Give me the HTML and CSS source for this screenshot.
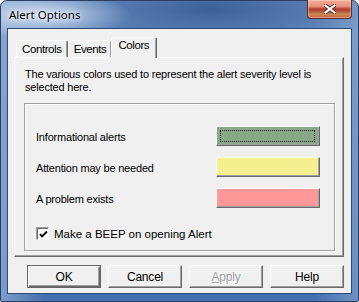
FILE: index.html
```html
<!DOCTYPE html>
<html lang="en">
<head>
    <meta charset="UTF-8">
    <title>Alert Options</title>
    <link rel="stylesheet" href="styles.css">
</head>
<body>
    <div class="window">
        <div class="titlebar">
            <span class="title">Alert Options</span>
            <div class="close">
                <svg width="12" height="10" viewBox="0 0 12 10">
                    <path d="M1.5 1.5 L10.5 8.5 M10.5 1.5 L1.5 8.5" stroke="#5a2418" stroke-width="4" stroke-linecap="square"/>
                    <path d="M1.5 1.5 L10.5 8.5 M10.5 1.5 L1.5 8.5" stroke="#fff" stroke-width="2.2" stroke-linecap="square"/>
                </svg>
            </div>
        </div>

        <div class="client">
            <!-- tab strip -->
            <div class="tabs">
                <div class="tab">Controls</div>
                <div class="tab">Events</div>
                <div class="tab active">Colors</div>
            </div>

            <div class="panel">
                <p class="intro">The various colors used to represent the alert severity level is selected here.</p>

                <div class="group">
                    <div class="rows">
                        <div class="row">
                            <span>Informational alerts</span>
                            <span class="swatch green"><span class="focus"></span></span>
                        </div>
                        <div class="row">
                            <span>Attention may be needed</span>
                            <span class="swatch yellow"></span>
                        </div>
                        <div class="row">
                            <span>A problem exists</span>
                            <span class="swatch red"></span>
                        </div>
                    </div>
                    <label class="check">
                        <span class="box">
                            <svg width="9" height="9" viewBox="0 0 9 9">
                                <path d="M1 4 L3 6.5 L8 1.5" fill="none" stroke="#000" stroke-width="1.8"/>
                            </svg>
                        </span>
                        Make a BEEP on opening Alert
                    </label>
                </div>
            </div>

            <div class="buttons">
                <div class="btn default">OK</div>
                <div class="btn">Cancel</div>
                <div class="btn disabled"><u>A</u>pply</div>
                <div class="btn">Help</div>
            </div>
        </div>
    </div>
</body>
</html>
```

FILE: styles.css
```css
body {
    margin: 0;
    padding: 0;
    background: #fff;
    font-family: "Liberation Sans", Arial, sans-serif;
    font-size: 11px;
    letter-spacing: -0.2px;
    color: #000;
}
.window {
    width: 359px;
    height: 302px;
    box-sizing: border-box;
    border: 1px solid #2a3f63;
    border-radius: 7px 7px 2px 2px;
    padding: 0 6px 7px 6px;
    display: flex;
    flex-direction: column;
    background:
        radial-gradient(ellipse 90px 24px at 40px 14px, rgba(215, 228, 244, 0.95), rgba(215, 228, 244, 0) 100%),
        radial-gradient(ellipse 170px 40px at 210px 8px, rgba(52, 88, 145, 0.85), rgba(52, 88, 145, 0) 100%),
        linear-gradient(90deg, rgba(150, 178, 215, 0.7) 0%, rgba(150, 178, 215, 0) 12%, rgba(150, 178, 215, 0) 88%, rgba(150, 178, 215, 0.5) 100%),
        linear-gradient(#6b8fc2 0%, #5a80b8 40%, #4470b0 100%);
}
.titlebar {
    height: 27px;
    display: flex;
    align-items: flex-start;
}
.title {
    font-family: "Noto Sans", "Open Sans", sans-serif;
    font-size: 11.5px;
    letter-spacing: 0;
    padding: 6px 0 0 2px;
    text-shadow: 0 0 6px #fff, 0 0 3px #fff;
}
.close {
    margin-left: auto;
    margin-top: -1px;
    width: 45px;
    height: 19px;
    box-sizing: border-box;
    border: 1px solid #5b2b28;
    border-top: none;
    border-radius: 0 0 4px 4px;
    display: flex;
    align-items: center;
    justify-content: center;
    background: linear-gradient(#f2ab9a 0%, #e9937e 35%, #b13c2b 50%, #b0513a 62%, #cc8b52 80%, #c85739 100%);
    box-shadow: inset 0 0 0 1px rgba(255, 220, 200, 0.5);
}
.client {
    flex: 1;
    background: #f0f0f0;
    border: 1px solid #2f4a74;
    display: flex;
    flex-direction: column;
}
.tabs {
    display: flex;
    align-items: flex-end;
    height: 20px;
    margin: 8px 0 0 8px;
    position: relative;
    z-index: 1;
}
.tab {
    height: 17px;
    box-sizing: border-box;
    padding: 2px 5px 0 5px;
    border: 1px solid;
    border-color: #fff #696969 transparent #fff;
    box-shadow: inset -1px 0 0 #a0a0a0;
    border-bottom: none;
    border-radius: 2px 2px 0 0;
    background: #f0f0f0;
    font-size: 11.5px;
    letter-spacing: -0.4px;
}
.tab.active {
    height: 21px;
    margin: 0 -2px -1px -1px;
    padding: 1px 7px 0 6px;
}
.panel {
    height: 200px;
    box-sizing: border-box;
    margin: 0 7px 0 6px;
    padding: 10px 8px 0 10px;
    border: 1px solid;
    border-color: #fff #696969 #696969 #fff;
    box-shadow: inset -1px -1px 0 #a0a0a0;
}
.intro {
    margin: 0;
    line-height: 13px;
    height: 26px;
}
.group {
    height: 148px;
    box-sizing: border-box;
    margin: 9px 0 0 -1px;
    padding: 0 14px 0 11px;
    border: 1px solid #a0a0a0;
    box-shadow: inset 1px 1px 0 #fff, 1px 1px 0 #fff;
}
.rows {
    display: flex;
    flex-direction: column;
    gap: 11px;
    padding-top: 22px;
}
.row {
    display: flex;
    align-items: center;
    justify-content: space-between;
    height: 20px;
}
.row span:first-child {
    padding-top: 2px;
}
.swatch {
    width: 104px;
    height: 20px;
    box-sizing: border-box;
    border: 1px solid;
    border-color: #fff #696969 #696969 #fff;
    box-shadow: inset -1px -1px 0 #a0a0a0;
    padding: 3px;
}
.swatch.green {
    background: #87a987;
}
.swatch.yellow {
    background: #f5f08f;
}
.swatch.red {
    background: #ff9999;
}
.focus {
    display: block;
    height: 100%;
    box-sizing: border-box;
    border: 1px dotted #000;
    margin-right: 1px;
}
.check {
    display: flex;
    align-items: center;
    gap: 5px;
    margin-top: 19px;
    font-size: 11.5px;
    letter-spacing: 0;
}
.box {
    width: 13px;
    height: 13px;
    box-sizing: border-box;
    background: #fff;
    border: 1px solid;
    border-color: #a0a0a0 #fff #fff #a0a0a0;
    box-shadow: inset 1px 1px 0 #696969;
    display: flex;
    align-items: center;
    justify-content: center;
    padding: 1px 0 0 1px;
}
.buttons {
    display: flex;
    gap: 7px;
    margin: 8px 0 0 19px;
}
.btn {
    width: 74px;
    height: 23px;
    box-sizing: border-box;
    border: 1px solid;
    border-color: #fff #696969 #696969 #fff;
    box-shadow: inset -1px -1px 0 #a0a0a0;
    display: flex;
    align-items: center;
    justify-content: center;
    font-size: 12px;
    letter-spacing: -0.2px;
}
.btn.default {
    border: 1px solid #646464;
    box-shadow: inset 1px 1px 0 #fff, inset -1px -1px 0 #696969, inset -2px -2px 0 #a0a0a0;
}
.btn.disabled {
    color: #a0a0a0;
    text-shadow: 1px 1px 0 #fff;
}
```
